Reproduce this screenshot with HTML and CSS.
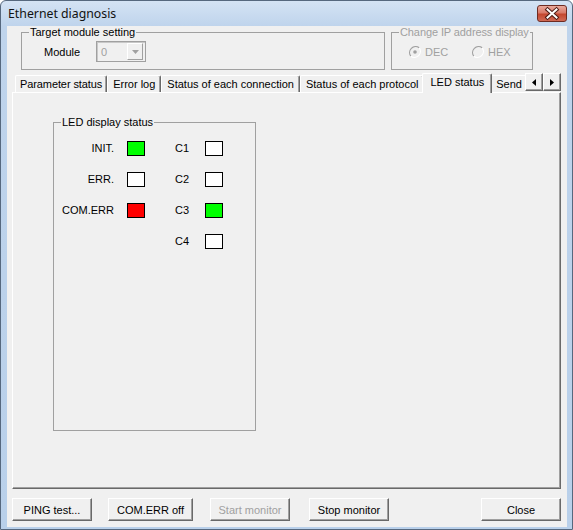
FILE: index.html
```html
<!DOCTYPE html>
<html>
<head>
<meta charset="utf-8">
<link rel="stylesheet" href="styles.css">
</head>
<body>
<div class="window">
  <div class="titlebar">
    <span class="title">Ethernet diagnosis</span>
    <div class="close-btn">
      <svg width="28" height="15" viewBox="0 0 28 15">
        <path d="M9.5 3.5 L18.5 11.5 M18.5 3.5 L9.5 11.5" stroke="#4a1a14" stroke-width="4" stroke-linecap="square"/>
        <path d="M9.5 3.5 L18.5 11.5 M18.5 3.5 L9.5 11.5" stroke="#fff" stroke-width="2" stroke-linecap="square"/>
      </svg>
    </div>
  </div>
  <div class="client">
    <div class="top-row">
      <fieldset class="group group-target">
        <legend>Target module setting</legend>
        <div class="module-row">
          <span class="module-label">Module</span>
          <div class="combo">
            <span class="combo-value">0</span>
            <span class="combo-btn">
              <svg width="7" height="4" viewBox="0 0 7 4"><path d="M0 0H7L3.5 4Z" fill="#a0a0a0"/></svg>
            </span>
          </div>
        </div>
      </fieldset>
      <fieldset class="group group-ip">
        <legend>Change IP address display</legend>
        <div class="radio-row">
          <span class="radio radio-dec">
            <svg width="12" height="12" viewBox="0 0 12 12">
              <circle cx="6" cy="6" r="5" fill="#f0f0f0"/>
              <path d="M10.2 1.8A6 6 0 0 0 1.8 10.2" fill="none" stroke="#a0a0a0" stroke-width="1.2"/>
              <path d="M1.8 10.2A6 6 0 0 0 10.2 1.8" fill="none" stroke="#fff" stroke-width="1.2"/>
              <circle cx="6" cy="6" r="1.8" fill="#a0a0a0"/>
            </svg>
            DEC
          </span>
          <span class="radio">
            <svg width="12" height="12" viewBox="0 0 12 12">
              <circle cx="6" cy="6" r="5" fill="#f0f0f0"/>
              <path d="M10.2 1.8A6 6 0 0 0 1.8 10.2" fill="none" stroke="#a0a0a0" stroke-width="1.2"/>
              <path d="M1.8 10.2A6 6 0 0 0 10.2 1.8" fill="none" stroke="#fff" stroke-width="1.2"/>
            </svg>
            HEX
          </span>
        </div>
      </fieldset>
    </div>

    <div class="tabstrip">
      <div class="tabs">
        <div class="tab tab-param">Parameter status</div>
        <div class="tab">Error log</div>
        <div class="tab">Status of each connection</div>
        <div class="tab">Status of each protocol</div>
        <div class="tab active">LED status</div>
        <div class="tab">Send e-mail status</div>
      </div>
      <div class="tab-scroll">
        <div class="scroll-btn"><svg width="4" height="7" viewBox="0 0 4 7"><path d="M4 0V7L0 3.5Z" fill="#000"/></svg></div>
        <div class="scroll-btn"><svg width="4" height="7" viewBox="0 0 4 7"><path d="M0 0V7L4 3.5Z" fill="#000"/></svg></div>
      </div>
    </div>

    <div class="panel">
      <fieldset class="group led-group">
        <legend>LED display status</legend>
        <div class="led-grid">
          <span class="led-label">INIT.</span>
          <span class="led led-green"></span>
          <span class="c-label">C1</span>
          <span class="led"></span>

          <span class="led-label">ERR.</span>
          <span class="led"></span>
          <span class="c-label">C2</span>
          <span class="led"></span>

          <span class="led-label">COM.ERR</span>
          <span class="led led-red"></span>
          <span class="c-label">C3</span>
          <span class="led led-green"></span>

          <span class="led-label"></span>
          <span></span>
          <span class="c-label">C4</span>
          <span class="led"></span>
        </div>
      </fieldset>
    </div>

    <div class="buttons">
      <div class="btn">PING test...</div>
      <div class="btn btn-wide">COM.ERR off</div>
      <div class="btn btn-disabled btn-start">Start monitor</div>
      <div class="btn btn-stop">Stop monitor</div>
      <div class="btn btn-close">Close</div>
    </div>
  </div>
</div>
</body>
</html>
```

FILE: styles.css
```css
html, body {
  margin: 0;
  padding: 0;
  background: #ffffff;
}

.window {
  width: 573px;
  height: 530px;
  box-sizing: border-box;
  border: 1px solid #56687e;
  border-radius: 6px 6px 0 0;
  background: linear-gradient(180deg, #d4e3f4 0px, #bfd4ec 25px, #b9d0ea 100%);
  padding: 0 5px 2px 6px;
  display: flex;
  flex-direction: column;
  font-family: "Liberation Sans", Arial, sans-serif;
  font-size: 11px;
  color: #000;
}

.titlebar {
  height: 25px;
  flex: none;
  display: flex;
  align-items: flex-start;
  justify-content: space-between;
}

.title {
  font-family: "Noto Sans", "Open Sans", sans-serif;
  font-size: 12.3px;
  line-height: 26px;
  padding-left: 1px;
  color: #111;
}

.close-btn {
  width: 30px;
  height: 17px;
  box-sizing: border-box;
  margin-top: 4px;
  border: 1px solid #6e2b22;
  border-radius: 3px;
  background: linear-gradient(180deg, #e9a99c 0%, #d97a69 45%, #c4472f 55%, #d06a55 100%);
  display: flex;
  align-items: center;
  justify-content: center;
}

.client {
  flex: 1;
  background: #f0f0f0;
  display: flex;
  flex-direction: column;
  padding: 0 6px 0 5px;
}

/* group boxes */
fieldset.group {
  margin: 0;
  padding: 0;
  min-width: 0;
  box-sizing: border-box;
  border: 1px solid #a0a0a0;
}

fieldset.group legend {
  padding: 0 1px;
  margin-left: 7px;
  line-height: 13px;
  white-space: nowrap;
}

.top-row {
  display: flex;
  height: 44px;
  flex: none;
  align-items: flex-start;
}

.group-target {
  width: 364px;
  height: 44px;
  margin-left: 9px !important;
}

.module-row {
  display: flex;
  align-items: center;
  margin-top: 2px;
  padding-left: 22px;
  height: 21px;
}

.module-label {
  width: 52px;
}

.combo {
  width: 50px;
  height: 21px;
  box-sizing: border-box;
  border: 1px solid #a0a0a0;
  box-shadow: inset 1px 1px 0 #c8c8c8;
  display: flex;
  align-items: center;
  padding: 1px 2px 1px 1px;
  background: #f0f0f0;
}

.combo-value {
  flex: 1;
  padding-left: 3px;
  color: #a0a0a0;
}

.combo-btn {
  width: 16px;
  height: 17px;
  box-sizing: border-box;
  border: 1px solid;
  border-color: #fff #a0a0a0 #a0a0a0 #fff;
  display: flex;
  align-items: center;
  justify-content: center;
}

.group-ip {
  width: 142px;
  height: 44px;
  margin-left: 6px !important;
  color: #a0a0a0;
}

.group-ip legend {
  margin-left: 5px;
  letter-spacing: -0.1px;
}

.radio-row {
  display: flex;
  align-items: center;
  height: 21px;
  margin-top: 2px;
  padding-left: 17px;
}

.radio {
  display: flex;
  align-items: center;
  gap: 4px;
}

.radio-dec {
  width: 63px;
}

/* tabs */
.tabstrip {
  flex: none;
  display: flex;
  height: 20px;
  margin-top: 3px;
  margin-bottom: -1px;
  position: relative;
  z-index: 1;
}

.tabs {
  flex: 1;
  min-width: 0;
  display: flex;
  align-items: flex-start;
  overflow: hidden;
  padding-left: 3px;
  height: 20px;
}

.tab {
  flex: none;
  box-sizing: border-box;
  height: 17px;
  margin-top: 2px;
  padding: 0 5px;
  line-height: 16px;
  border-top: 1px solid #fff;
  border-left: 1px solid #fff;
  border-right: 1px solid #696969;
  box-shadow: inset -1px 0 0 #a0a0a0;
  border-radius: 2px 2px 0 0;
  background: #f0f0f0;
  white-space: nowrap;
}

.tab-param {
  padding: 0 4px 0 4px;
  letter-spacing: -0.1px;
}

.tab.active {
  height: 20px;
  margin-top: 0;
  margin-left: -2px;
  margin-right: -2px;
  padding: 0 7px;
  line-height: 17px;
  position: relative;
  z-index: 1;
}

.tab-scroll {
  flex: none;
  display: flex;
  align-items: flex-start;
}

.scroll-btn {
  width: 18px;
  height: 18px;
  box-sizing: border-box;
  border: 1px solid;
  border-color: #fff #696969 #696969 #fff;
  box-shadow: inset -1px -1px 0 #a0a0a0;
  background: #f0f0f0;
  display: flex;
  align-items: center;
  justify-content: center;
}

/* panel */
.panel {
  flex: none;
  height: 397px;
  box-sizing: border-box;
  border: 1px solid;
  border-color: #fff #696969 #696969 #fff;
  box-shadow: inset -1px -1px 0 #a0a0a0;
  padding: 23px 0 0 40px;
}

.led-group {
  width: 203px;
  height: 315px;
}

.led-group legend {
  margin-left: 7px;
}

.led-grid {
  display: grid;
  grid-template-columns: 73px 18px 60px 18px;
  grid-auto-rows: 15px;
  row-gap: 16px;
  padding-top: 12px;
  align-items: center;
}

.led-label {
  text-align: right;
  padding-right: 13px;
  line-height: 15px;
  white-space: nowrap;
}

.c-label {
  padding-left: 30px;
  line-height: 15px;
}

.led {
  width: 18px;
  height: 15px;
  box-sizing: border-box;
  border: 1px solid #000;
  background: #fff;
}

.led-green {
  background: #00ff00;
}

.led-red {
  background: #ff0000;
}

/* bottom buttons */
.buttons {
  flex: none;
  display: flex;
  gap: 16px;
  margin-top: 9px;
  height: 23px;
}

.btn {
  width: 80px;
  height: 23px;
  box-sizing: border-box;
  border: 1px solid;
  border-color: #fff #696969 #696969 #fff;
  box-shadow: inset -1px -1px 0 #a0a0a0;
  background: #f0f0f0;
  display: flex;
  align-items: center;
  justify-content: center;
  white-space: nowrap;
}

.btn-wide {
  width: 85px;
}

.btn-disabled {
  color: #a0a0a0;
}

.btn-start {
  margin-left: 1px;
}

.btn-stop {
  margin-left: 3px;
}

.btn-close {
  margin-left: auto;
}
```
